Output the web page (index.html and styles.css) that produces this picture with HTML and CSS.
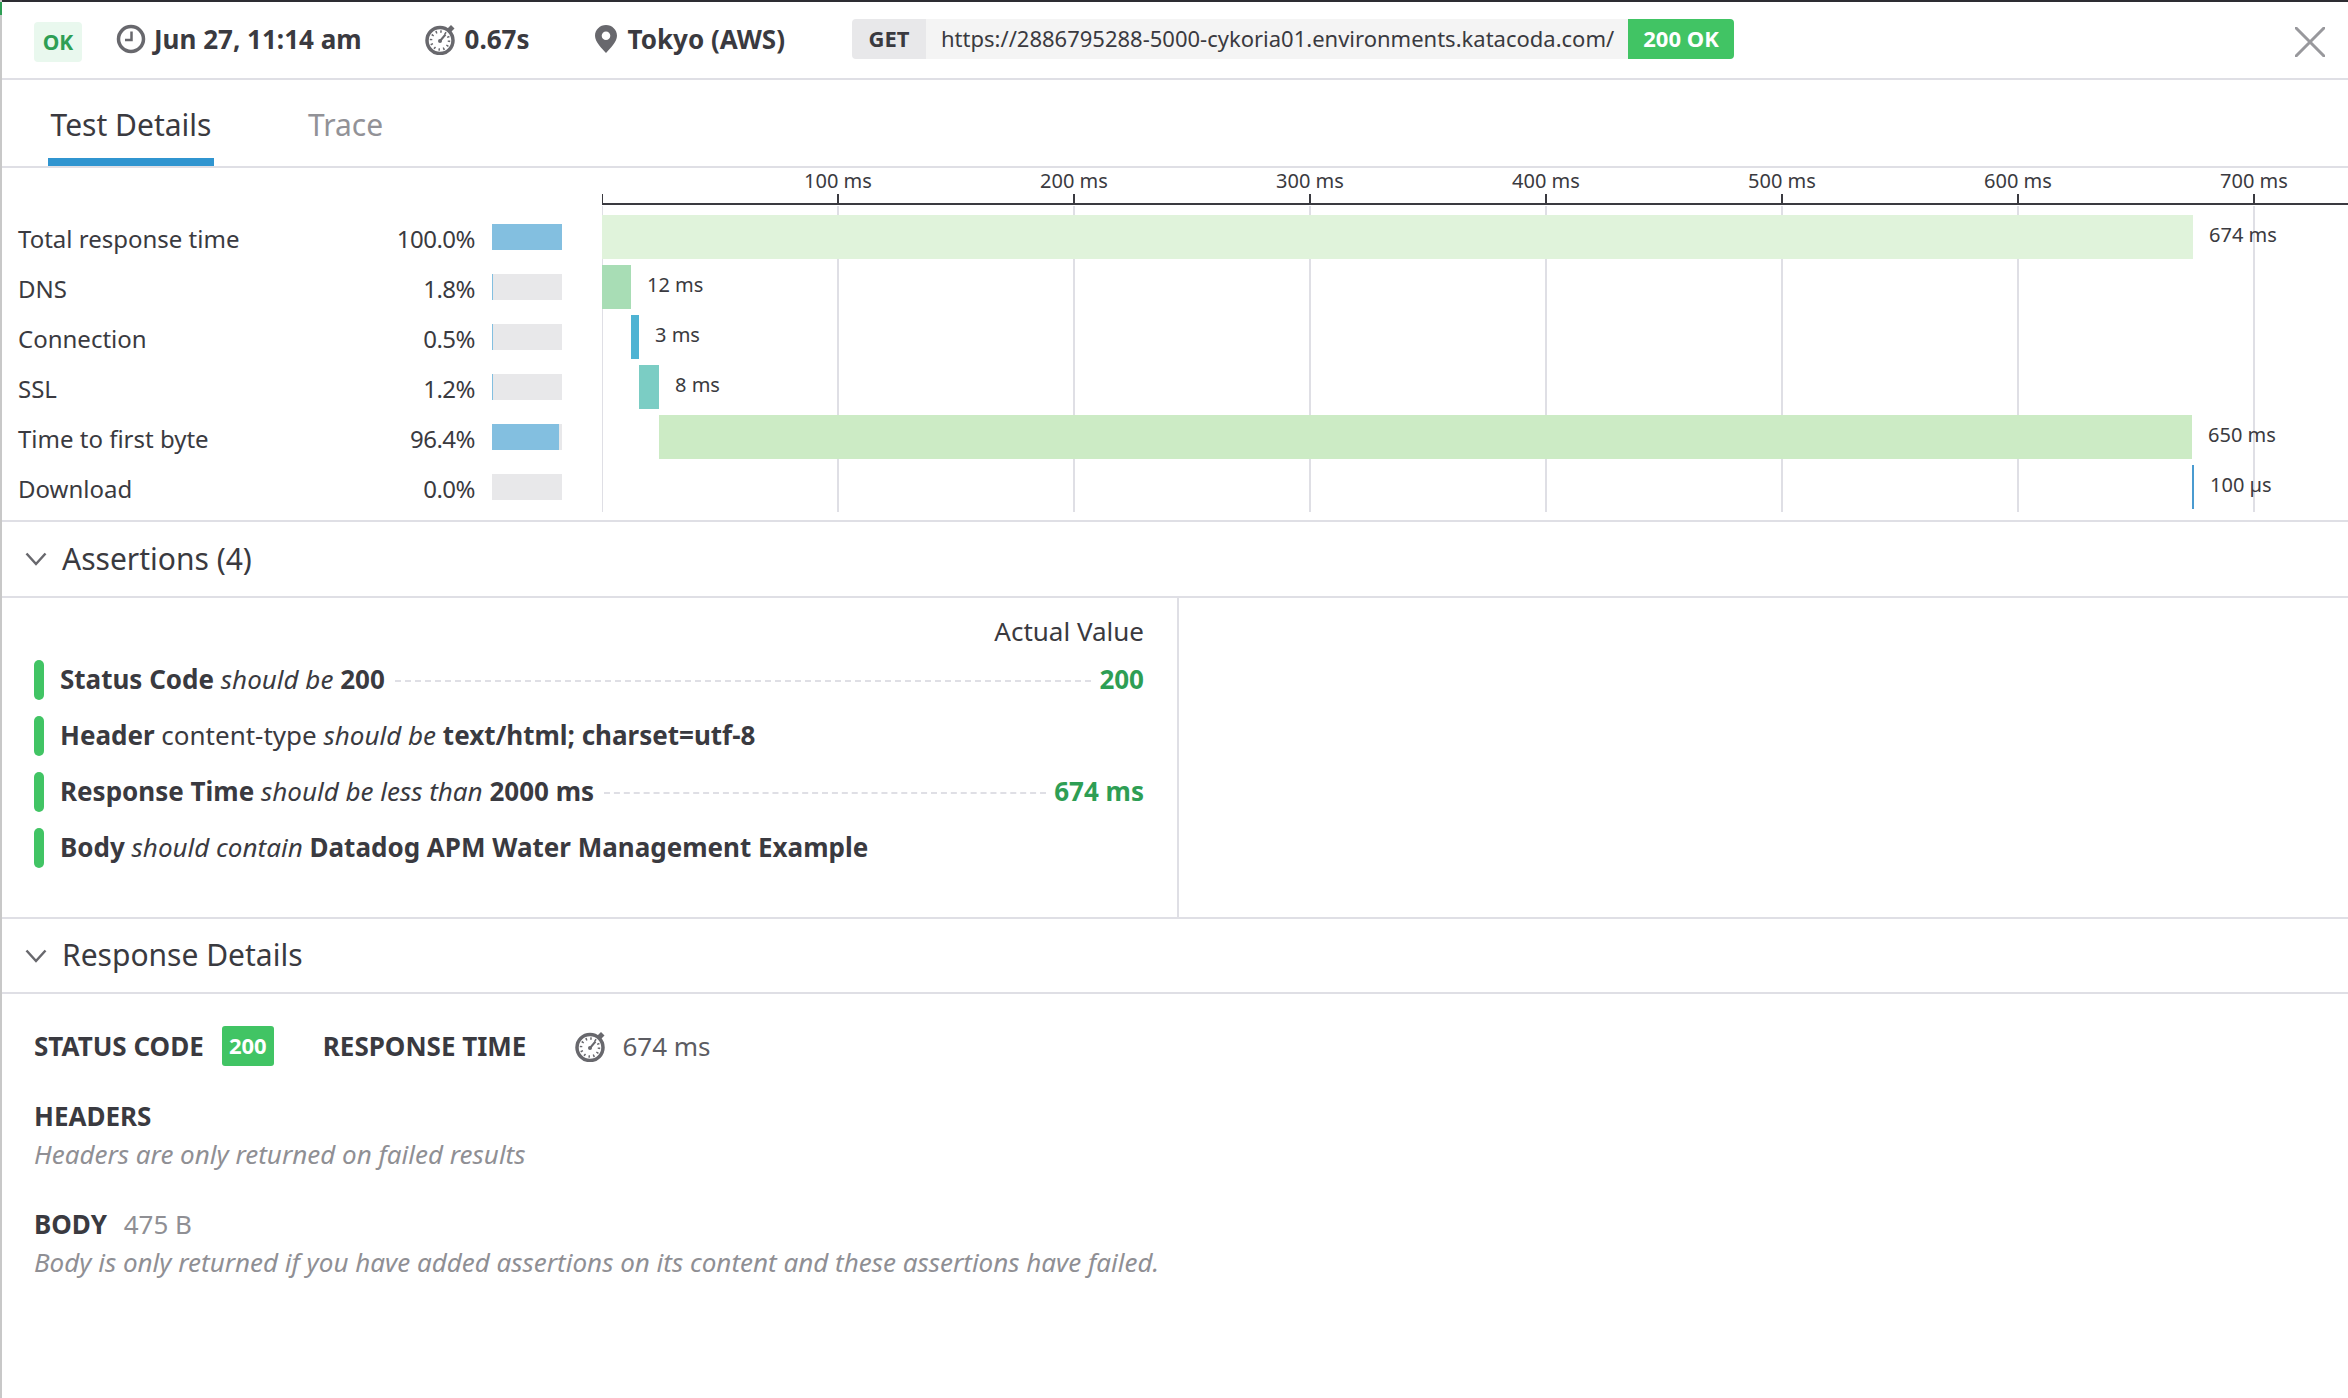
FILE: index.html
```html
<!DOCTYPE html>
<html lang="en">
<head>
    <meta charset="UTF-8">
    <title>Test Details</title>
    <link rel="stylesheet" href="styles.css">
</head>
<body>
    <div class="top-strip"></div>
    <div class="status-flag"></div>

    <header class="result-bar">
        <span class="ok-badge">OK</span>
        <span class="meta meta-date">
            <svg class="icon-clock" viewBox="0 0 30 30"><circle cx="15" cy="15" r="12.500" fill="none" stroke="#68686d" stroke-width="3.500"/><path d="M15.500 7.500v8.500H9" fill="none" stroke="#68686d" stroke-width="2.500"/></svg>
            Jun 27, 11:14 am
        </span>
        <span class="meta meta-time">
            <svg class="icon-timer" viewBox="0 0 32 32"><use href="#timer"/></svg>
            0.67s
        </span>
        <span class="meta meta-place">
            <svg class="icon-pin" viewBox="0 0 22 28"><path fill-rule="evenodd" fill="#68686d" d="M11 0C4.9 0 0 4.8 0 10.8 0 17 7 23.500 11 28c4-4.500 11-11 11-17.200C22 4.800 17.100 0 11 0zm0 6.500a4.300 4.300 0 1 1 0 8.600 4.300 4.300 0 0 1 0-8.600z"/></svg>
            Tokyo (AWS)
        </span>
        <div class="request">
            <span class="request-method">GET</span>
            <span class="request-url">https://2886795288-5000-cykoria01.environments.katacoda.com/</span>
            <span class="request-status">200 OK</span>
        </div>
        <svg class="close" viewBox="0 0 30 30"><path d="M1 1l28 28M29 1L1 29" stroke="#98989c" stroke-width="3" stroke-linecap="round"/></svg>
    </header>

    <nav class="tabs">
        <a class="tab tab-active">Test Details</a>
        <a class="tab">Trace</a>
    </nav>

    <section class="chart">
        <div class="timings">
            <div class="timing"><span class="timing-name">Total response time</span><span class="timing-pct">100.0%</span><span class="mini"><span class="mini-fill" style="width:100%"></span></span></div>
            <div class="timing"><span class="timing-name">DNS</span><span class="timing-pct">1.8%</span><span class="mini"><span class="mini-fill" style="width:1.8%"></span></span></div>
            <div class="timing"><span class="timing-name">Connection</span><span class="timing-pct">0.5%</span><span class="mini"><span class="mini-fill" style="width:0.5%"></span></span></div>
            <div class="timing"><span class="timing-name">SSL</span><span class="timing-pct">1.2%</span><span class="mini"><span class="mini-fill" style="width:1.2%"></span></span></div>
            <div class="timing"><span class="timing-name">Time to first byte</span><span class="timing-pct">96.4%</span><span class="mini"><span class="mini-fill" style="width:96.4%"></span></span></div>
            <div class="timing"><span class="timing-name">Download</span><span class="timing-pct">0.0%</span><span class="mini"><span class="mini-fill" style="width:0"></span></span></div>
        </div>
        <div class="timeline">
            <div class="axis">
                <div class="tick"><span>100 ms</span></div>
                <div class="tick"><span>200 ms</span></div>
                <div class="tick"><span>300 ms</span></div>
                <div class="tick"><span>400 ms</span></div>
                <div class="tick"><span>500 ms</span></div>
                <div class="tick"><span>600 ms</span></div>
                <div class="tick"><span>700 ms</span></div>
            </div>
            <div class="grid">
                <i></i><i></i><i></i><i></i><i></i><i></i><i></i>
            </div>
            <div class="bars">
                <div class="bar-row"><span class="bar bar-total" style="margin-left:0;width:1591px"></span><span class="bar-label">674 ms</span></div>
                <div class="bar-row"><span class="bar bar-dns" style="margin-left:0;width:29px"></span><span class="bar-label">12 ms</span></div>
                <div class="bar-row"><span class="bar bar-conn" style="margin-left:29px;width:8px"></span><span class="bar-label">3 ms</span></div>
                <div class="bar-row"><span class="bar bar-ssl" style="margin-left:37px;width:20px"></span><span class="bar-label">8 ms</span></div>
                <div class="bar-row"><span class="bar bar-ttfb" style="margin-left:57px;width:1533px"></span><span class="bar-label">650 ms</span></div>
                <div class="bar-row"><span class="bar bar-down" style="margin-left:1590px;width:2px"></span><span class="bar-label">100 µs</span></div>
            </div>
        </div>
    </section>

    <h2 class="section-head">
        <svg class="chevron" viewBox="0 0 22 14"><path d="M1.500 1.500L11 12l9.500-10.500" fill="none" stroke="#68686d" stroke-width="2.500"/></svg>
        Assertions (4)
    </h2>

    <section class="assertions">
        <div class="assertion-list">
            <div class="actual-head">Actual Value</div>
            <div class="assertion">
                <span class="assertion-mark"></span>
                <span class="assertion-text"><b>Status Code</b> <em>should be</em> <b>200</b></span>
                <span class="assertion-dash"></span>
                <b class="assertion-value">200</b>
            </div>
            <div class="assertion">
                <span class="assertion-mark"></span>
                <span class="assertion-text"><b>Header</b> content-type <em>should be</em> <b>text/html; charset=utf-8</b></span>
            </div>
            <div class="assertion">
                <span class="assertion-mark"></span>
                <span class="assertion-text"><b>Response Time</b> <em>should be less than</em> <b>2000 ms</b></span>
                <span class="assertion-dash"></span>
                <b class="assertion-value">674 ms</b>
            </div>
            <div class="assertion">
                <span class="assertion-mark"></span>
                <span class="assertion-text"><b>Body</b> <em>should contain</em> <b>Datadog APM Water Management Example</b></span>
            </div>
        </div>
    </section>

    <h2 class="section-head section-head-response">
        <svg class="chevron" viewBox="0 0 22 14"><path d="M1.500 1.500L11 12l9.500-10.500" fill="none" stroke="#68686d" stroke-width="2.500"/></svg>
        Response Details
    </h2>

    <section class="response">
        <div class="response-summary">
            <span class="caps">Status Code</span>
            <span class="code-badge">200</span>
            <span class="caps caps-time">Response Time</span>
            <svg class="icon-timer" viewBox="0 0 32 32"><use href="#timer"/></svg>
            <span class="response-ms">674 ms</span>
        </div>
        <div class="caps block-title">Headers</div>
        <p class="note">Headers are only returned on failed results</p>
        <div class="block-title block-title-body"><span class="caps">Body</span> <span class="size">475 B</span></div>
        <p class="note">Body is only returned if you have added assertions on its content and these assertions have failed.</p>
    </section>

    <svg class="defs" width="0" height="0">
        <symbol id="timer" viewBox="0 0 32 32">
            <circle cx="15" cy="17.500" r="13" fill="none" stroke="#68686d" stroke-width="3.500"/>
            <path d="M22.500 5.500l3.500-3.500 3.500 3.500-3.500 3.500z" fill="#68686d"/>
            <path d="M15 18l5.500-6.500" stroke="#68686d" stroke-width="2"/>
            <circle cx="15" cy="18" r="2" fill="#68686d"/>
            <circle cx="15" cy="17.500" r="9" fill="none" stroke="#68686d" stroke-width="2.500" stroke-dasharray="1.500 3.210"/>
        </symbol>
    </svg>
</body>
</html>
```

FILE: styles.css
```css
* {
    box-sizing: border-box;
}

html, body {
    height: 100%;
    margin: 0;
}

body {
    font-family: "Noto Sans", "Open Sans", sans-serif;
    color: #3a3a40;
    background-color: #fff;
    border-left: 2px solid #c8c8c8;
    overflow: hidden;
}

.defs {
    position: absolute;
}

.top-strip {
    height: 2px;
    margin-left: -2px;
    background-color: #2d2d33;
}

.status-flag {
    position: absolute;
    left: 0;
    top: 2px;
    width: 2px;
    height: 13px;
    background-color: #2e9e54;
}

/* header */

.result-bar {
    height: 78px;
    padding-bottom: 2px;
    display: flex;
    align-items: center;
    border-bottom: 2px solid #dfdfe5;
    position: relative;
}

.ok-badge {
    width: 48px;
    height: 40px;
    margin-left: 32px;
    margin-top: 6px;
    display: flex;
    align-items: center;
    justify-content: center;
    background-color: #e9f8ee;
    border-radius: 4px;
    color: #2e9e54;
    font-size: 21px;
    font-weight: bold;
}

.meta {
    display: flex;
    align-items: center;
    font-size: 26px;
    font-weight: bold;
}

.meta svg {
    margin-right: 8px;
}

.meta-date {
    margin-left: 34px;
}

.meta-time {
    margin-left: 63px;
}

.meta-place {
    margin-left: 65px;
}

.meta .icon-pin {
    margin-right: 11px;
}

.icon-clock {
    width: 30px;
    height: 30px;
}

.icon-timer {
    width: 32px;
    height: 32px;
}

.icon-pin {
    width: 22px;
    height: 28px;
}

.request {
    margin-left: 67px;
    height: 40px;
    display: flex;
    align-items: stretch;
    font-size: 22px;
    line-height: 38px;
    border-radius: 4px;
    overflow: hidden;
}

.request-method {
    width: 74px;
    text-align: center;
    background-color: #e8e8ea;
    font-weight: bold;
}

.request-url {
    width: 702px;
    padding-left: 15px;
    background-color: #f4f4f4;
    white-space: nowrap;
}

.request-status {
    width: 106px;
    text-align: center;
    background-color: #41c464;
    color: #fff;
    font-weight: bold;
}

.close {
    position: absolute;
    right: 23px;
    top: 25px;
    width: 30px;
    height: 30px;
}

/* tabs */

.tabs {
    height: 88px;
    padding-left: 46px;
    display: flex;
    border-bottom: 2px solid #dfdfe5;
}

.tab {
    height: 86px;
    margin-right: 94px;
    padding-top: 12px;
    font-size: 30px;
    line-height: 66px;
    color: #929297;
}

.tab-active {
    width: 166px;
    text-align: center;
    color: #3a3a40;
    border-bottom: 8px solid #3095d0;
}

/* waterfall */

.chart {
    height: 354px;
    display: flex;
    border-bottom: 2px solid #dfdfe5;
}

.timings {
    width: 600px;
    padding-top: 47px;
}

.timing {
    height: 50px;
    padding-bottom: 6px;
    display: flex;
    align-items: center;
    font-size: 24px;
}

.timing-name {
    width: 358px;
    padding-left: 16px;
    padding-top: 2px;
    white-space: nowrap;
}

.timing-pct {
    width: 115px;
    text-align: right;
    padding-top: 2px;
    letter-spacing: -0.5px;
}

.mini {
    width: 70px;
    height: 26px;
    margin-left: 17px;
    background-color: #e8e8ea;
}

.mini-fill {
    display: block;
    height: 100%;
    background-color: #83bfe0;
}

.timeline {
    position: relative;
    flex: 1;
}

.axis {
    height: 37px;
    display: flex;
    border-bottom: 2px solid #3a3a40;
    position: relative;
}

.axis::before {
    content: "";
    position: absolute;
    left: 0;
    top: 26px;
    width: 1px;
    height: 9px;
    background-color: #3a3a40;
}

.tick {
    flex: 0 0 236px;
    position: relative;
    border-right: 0;
}

.tick::after {
    content: "";
    position: absolute;
    right: -1px;
    top: 26px;
    width: 2px;
    height: 9px;
    background-color: #3a3a40;
}

.tick span {
    position: absolute;
    right: -36px;
    top: 0;
    width: 72px;
    text-align: center;
    font-size: 20px;
    line-height: 26px;
    white-space: nowrap;
}

.grid {
    position: absolute;
    left: 0;
    top: 38px;
    height: 306px;
    display: flex;
    border-left: 1px solid #dfdfe5;
}

.grid i {
    flex: 0 0 236px;
    border-right: 2px solid #dfdfe5;
}

.bars {
    position: relative;
    padding-top: 10px;
}

.bar-row {
    height: 44px;
    margin-bottom: 6px;
    display: flex;
    align-items: stretch;
}

.bar-label {
    margin-left: 16px;
    font-size: 20px;
    line-height: 40px;
    white-space: nowrap;
}

.bar-total { background-color: #e0f3db; }
.bar-dns { background-color: #a8ddb5; }
.bar-conn { background-color: #4eb3d3; }
.bar-ssl { background-color: #7bcdc4; }
.bar-ttfb { background-color: #ccebc5; }
.bar-down { background-color: #4a9bd0; }

/* collapsible sections */

.section-head {
    height: 76px;
    margin: 0;
    display: flex;
    align-items: center;
    padding-left: 23px;
    padding-bottom: 2px;
    font-size: 30px;
    font-weight: normal;
    border-bottom: 2px solid #dfdfe5;
}

.chevron {
    width: 22px;
    height: 14px;
    margin-right: 15px;
    margin-top: 2px;
}

.assertions {
    height: 321px;
    border-bottom: 2px solid #dfdfe5;
}

.assertion-list {
    width: 1177px;
    height: 100%;
    padding: 14px 33px 0 32px;
    border-right: 2px solid #dfdfe5;
    font-size: 26px;
}

.actual-head {
    height: 48px;
    text-align: right;
    line-height: 38px;
}

.assertion {
    height: 40px;
    margin-bottom: 16px;
    display: flex;
    align-items: center;
}

.assertion-mark {
    width: 10px;
    height: 40px;
    margin-right: 16px;
    background-color: #41c464;
    border-radius: 5px;
}

.assertion-text,
.assertion-value {
    margin-bottom: 3px;
    white-space: nowrap;
}

.assertion-dash {
    flex: 1;
    margin: 2px 8px 0 10px;
    border-top: 2px dashed #dfdfe5;
}

.assertion-value {
    color: #2e9e54;
}

.section-head-response {
    height: 75px;
}

.response {
    padding: 32px 32px 0;
    font-size: 26px;
}

.response-summary {
    height: 40px;
    display: flex;
    align-items: center;
}

.caps {
    font-weight: bold;
    text-transform: uppercase;
    font-size: 26px;
}

.code-badge {
    width: 52px;
    height: 40px;
    margin-left: 18px;
    background-color: #41c464;
    color: #fff;
    font-size: 22px;
    font-weight: bold;
    line-height: 38px;
    text-align: center;
    border-radius: 3px;
}

.caps-time {
    margin-left: 49px;
    margin-right: 49px;
}

.response-ms {
    margin-left: 15px;
    color: #5c5c62;
}

.block-title {
    display: block;
    margin-top: 31px;
    line-height: 38px;
}

.block-title-body {
    margin-top: 32px;
}

.size {
    margin-left: 10px;
    color: #8f8f94;
}

.note {
    margin: 0;
    line-height: 38px;
    color: #8f8f94;
    font-style: italic;
}
```
